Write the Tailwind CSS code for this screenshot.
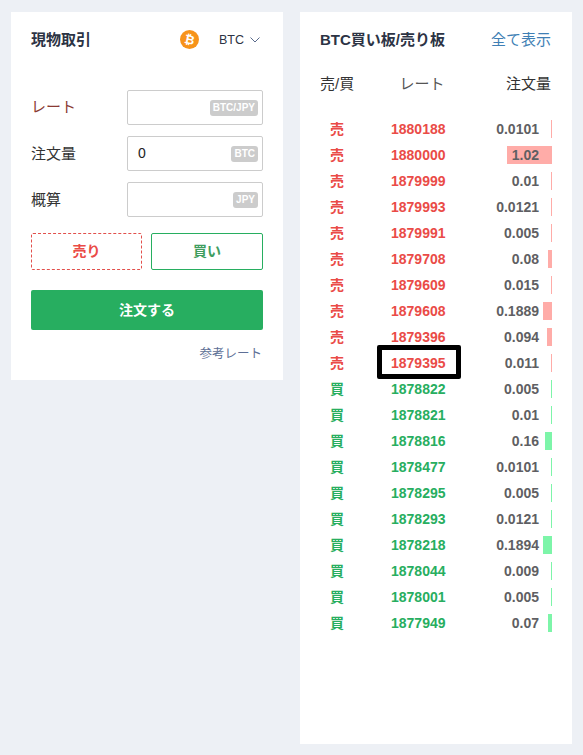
<!DOCTYPE html>
<html lang="ja">
<head>
<meta charset="UTF-8">
<title>現物取引</title>
<script src="https://cdn.jsdelivr.net/npm/@tailwindcss/browser@4"></script>
</head>
<body class="bg-[#edf0f5] font-['Liberation_Sans','Noto_Sans_CJK_JP',sans-serif] text-[14px] text-[#333]">
<div class="flex items-start gap-[17px] pl-[11px] pt-[12px] h-[755px] overflow-hidden">

  <!-- order form -->
  <div class="w-[272px] h-[368px] bg-white px-[20px] pt-[17px]">
    <div class="flex items-center h-[20px]">
      <h2 class="pt-[2px] font-bold text-[15px] text-[#2c3344]">現物取引</h2>
      <svg class="ml-auto w-[19px] h-[19px]" viewBox="0 0 20 20">
        <circle cx="10" cy="10" r="10" fill="#f7931a"/>
        <text x="10" y="14.5" text-anchor="middle" font-size="13" font-weight="700" fill="#fff" transform="rotate(12 10 10)">₿</text>
      </svg>
      <span class="ml-[20px] pt-[2px] text-[12.5px] text-[#2c3344]">BTC</span>
      <svg class="ml-[6px] mr-[3px] mt-[2px] w-[10px] h-[6px]" viewBox="0 0 10 6" fill="none" stroke="#5a6b8c"><path d="M0.5 0.5L5 5L9.5 0.5"/></svg>
    </div>

    <div class="mt-[41px] flex flex-col gap-[11px]">
      <div class="flex items-center justify-between">
        <label class="text-[15px] text-[#8a3a34]">レート</label>
        <div class="w-[136px] h-[35px] border border-[#ccc] rounded-[2px] flex items-center justify-end pr-[4px]">
          <span class="bg-[#ccc] text-white font-bold text-[10px] leading-[16px] px-[3px] rounded-[3px]">BTC/JPY</span>
        </div>
      </div>
      <div class="flex items-center justify-between">
        <label class="pt-[2px] text-[15px]">注文量</label>
        <div class="w-[136px] h-[35px] border border-[#ccc] rounded-[2px] flex items-center justify-between pl-[10px] pr-[4px]">
          <span class="text-[14px] text-[#222]">0</span>
          <span class="bg-[#ccc] text-white font-bold text-[10px] leading-[16px] px-[3px] rounded-[3px]">BTC</span>
        </div>
      </div>
      <div class="flex items-center justify-between">
        <label class="pt-[2px] text-[15px]">概算</label>
        <div class="w-[136px] h-[35px] border border-[#ccc] rounded-[2px] flex items-center justify-end pr-[4px]">
          <span class="bg-[#ccc] text-white font-bold text-[10px] leading-[16px] px-[3px] rounded-[3px]">JPY</span>
        </div>
      </div>
    </div>

    <div class="mt-[16px] flex gap-[9px]">
      <button class="w-[111px] h-[37px] border border-dashed border-[#e2504c] rounded-[2px] font-bold text-[#ea4b47]">売り</button>
      <button class="w-[112px] h-[37px] border border-[#27ae60] rounded-[2px] font-bold text-[#3f9e5f]">買い</button>
    </div>

    <button class="mt-[20px] w-full h-[40px] bg-[#27ae60] rounded-[2px] text-white font-bold">注文する</button>

    <div class="mt-[15px] pr-[1px] text-right text-[12.5px] text-[#5d6f96]">参考レート</div>
  </div>

  <!-- order book -->
  <div class="relative w-[272px] h-[732px] bg-white pl-[20px] pr-[21px] pt-[17px]">
    <div class="flex items-center justify-between h-[20px]">
      <h2 class="pt-[2px] font-bold text-[15px] text-[#2c3344]">BTC買い板/売り板</h2>
      <a class="pt-[2px] text-[#3f7fb5] text-[15px]">全て表示</a>
    </div>
    <div class="mt-[25px] flex justify-between items-center h-[20px] text-[15px]">
      <span class="w-[50px]">売/買</span>
      <span class="w-[80px] text-center text-[#555] -ml-[27px]">レート</span>
      <span class="w-[50px] text-right">注文量</span>
    </div>
    <div id="rows" class="mt-[22px]"></div>
    <!-- highlight box -->
    <div class="absolute left-[77px] top-[333px] w-[84px] h-[34px] border-[5px] border-black rounded-[2px]"></div>
  </div>
</div>

<script>
const book = [
  ['売', '1880188', '0.0101', 1],
  ['売', '1880000', '1.02', 45],
  ['売', '1879999', '0.01', 1],
  ['売', '1879993', '0.0121', 1],
  ['売', '1879991', '0.005', 1],
  ['売', '1879708', '0.08', 4],
  ['売', '1879609', '0.015', 1],
  ['売', '1879608', '0.1889', 9],
  ['売', '1879396', '0.094', 5],
  ['売', '1879395', '0.011', 1],
  ['買', '1878822', '0.005', 1],
  ['買', '1878821', '0.01', 1],
  ['買', '1878816', '0.16', 7],
  ['買', '1878477', '0.0101', 1],
  ['買', '1878295', '0.005', 1],
  ['買', '1878293', '0.0121', 1],
  ['買', '1878218', '0.1894', 9],
  ['買', '1878044', '0.009', 1],
  ['買', '1878001', '0.005', 1],
  ['買', '1877949', '0.07', 4],
];
const wrap = document.getElementById('rows');
book.forEach(([side, rate, amount, bar]) => {
  const sell = side === '売';
  const row = document.createElement('div');
  row.className = 'flex items-center h-[26px] font-bold ' + (sell ? 'text-[#ea4b47]' : 'text-[#27ae60]');
  row.innerHTML = `
    <span class="w-[34px] text-center">${side}</span>
    <span class="ml-[37px] w-[54px] text-[14px]">${rate}</span>
    <div class="relative ml-auto w-[97px] h-[18px] -mr-[1px]">
      <div class="absolute right-0 top-0 h-[18px] ${sell ? 'bg-[#ffaca8]' : 'bg-[#7df5a9]'}" style="width:${bar}px"></div>
      <span class="absolute right-[13px] top-0 leading-[18px] text-[#5f5f63]">${amount}</span>
    </div>`;
  wrap.appendChild(row);
});
</script>
</body>
</html>
